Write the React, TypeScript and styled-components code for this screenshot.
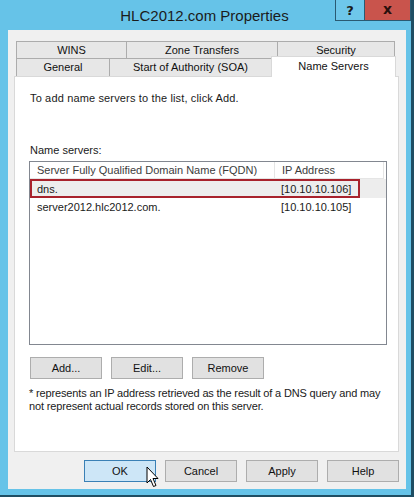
import React, { FC } from 'react';
import styled, { createGlobalStyle } from 'styled-components';

const GlobalStyle = createGlobalStyle`
  html, body {
    margin: 0;
    padding: 0;
    background: #ffffff;
  }
  * {
    box-sizing: border-box;
  }
`;

const UI_FONT = `'Liberation Sans', Arial, sans-serif`;

type TabDataType = { id: number; name: string; width: number };

const topTabs: TabDataType[] = [
  { id: 1, name: 'WINS', width: 111 },
  { id: 2, name: 'Zone Transfers', width: 152 },
  { id: 3, name: 'Security', width: 118 },
];

const bottomTabs: TabDataType[] = [
  { id: 4, name: 'General', width: 94 },
  { id: 5, name: 'Start of Authority (SOA)', width: 163 },
  { id: 6, name: 'Name Servers', width: 125 },
];

const servers = [
  { id: 1, fqdn: 'dns.', ip: '[10.10.10.106]', selected: true },
  { id: 2, fqdn: 'server2012.hlc2012.com.', ip: '[10.10.10.105]', selected: false },
];

const Cursor: FC = () => (
  <CursorBox>
    <svg width="13" height="22" viewBox="0 0 13 22">
      <path
        d="M1 1 L1 17 L4.5 13.5 L7.5 20.5 L10 19.5 L7 12.5 L12 12.5 Z"
        fill="#ffffff"
        stroke="#000000"
        strokeWidth="1"
        strokeLinejoin="round"
      />
    </svg>
  </CursorBox>
);

const App: FC = () => {
  const selectedTab = 6;
  return (
    <>
      <GlobalStyle />
      <Window>
        <TitleBar>
          <Title>HLC2012.com Properties</Title>
          <CaptionButtons>
            <HelpCaption>?</HelpCaption>
            <CloseCaption>x</CloseCaption>
          </CaptionButtons>
        </TitleBar>
        <Body>
          <TabStrip>
            <TabRow>
              {topTabs.map((t) => (
                <Tab key={t.id} $width={t.width}>
                  {t.name}
                </Tab>
              ))}
            </TabRow>
            <TabRow>
              {bottomTabs.map((t) =>
                t.id === selectedTab ? (
                  <SelectedTab key={t.id} $width={t.width}>
                    {t.name}
                  </SelectedTab>
                ) : (
                  <Tab key={t.id} $width={t.width}>
                    {t.name}
                  </Tab>
                )
              )}
            </TabRow>
          </TabStrip>
          <Panel>
            <Intro>To add name servers to the list, click Add.</Intro>
            <Label>Name servers:</Label>
            <ListBox>
              <ListHeader>
                <HeaderCell $width={245}>Server Fully Qualified Domain Name (FQDN)</HeaderCell>
                <HeaderCell $width={109}>IP Address</HeaderCell>
              </ListHeader>
              {servers.map((s) => (
                <ListRow key={s.id} $selected={s.selected}>
                  <NameCell>{s.fqdn}</NameCell>
                  <IpCell>{s.ip}</IpCell>
                  {s.selected && <Highlight />}
                </ListRow>
              ))}
            </ListBox>
            <ButtonRow>
              <Button>Add...</Button>
              <Button>Edit...</Button>
              <Button>Remove</Button>
            </ButtonRow>
            <Note>
              * represents an IP address retrieved as the result of a DNS query and may
              <br />
              not represent actual records stored on this server.
            </Note>
          </Panel>
          <Footer>
            <OkWrap>
              <Button $primary>OK</Button>
              <Cursor />
            </OkWrap>
            <Button>Cancel</Button>
            <Button>Apply</Button>
            <Button>Help</Button>
          </Footer>
        </Body>
      </Window>
    </>
  );
};

export default App;

const Window = styled.div`
  width: 414px;
  height: 497px;
  background: #66c3e8;
  border-right: 3px solid #1f4e63;
  border-bottom: 2px solid #1f4e63;
  display: flex;
  flex-direction: column;
  font-family: ${UI_FONT};
  font-size: 11px;
  color: #1a1a1a;
`;

const TitleBar = styled.div`
  height: 30px;
  display: flex;
  align-items: center;
  justify-content: center;
  position: relative;
`;

const Title = styled.div`
  font-family: ${UI_FONT};
  font-size: 15px;
  color: #1b1b1b;
  padding-top: 1px;
  padding-right: 2px;
`;

const CaptionButtons = styled.div`
  position: absolute;
  top: 0;
  right: 0;
  display: flex;
`;

const HelpCaption = styled.div`
  width: 29px;
  height: 21px;
  border: 1px solid #2a5a72;
  border-top: none;
  border-right: none;
  background: #6ec7ea;
  display: flex;
  align-items: center;
  justify-content: center;
  font-family: 'DejaVu Sans', sans-serif;
  font-weight: bold;
  font-size: 13px;
  color: #1a1a1a;
`;

const CloseCaption = styled.div`
  width: 47px;
  height: 21px;
  border: 1px solid #2a5a72;
  border-top: none;
  background: #c9544c;
  display: flex;
  align-items: center;
  justify-content: center;
  font-family: 'DejaVu Sans', sans-serif;
  font-weight: bold;
  font-size: 14px;
  color: #2a0f0c;
  padding-bottom: 3px;
`;

const Body = styled.div`
  flex: 1;
  margin: 0 0 6px 8px;
  width: 398px;
  background: #f0f0f0;
  padding: 11px 7px 0 6px;
  display: flex;
  flex-direction: column;
`;

const TabStrip = styled.div`
  display: flex;
  flex-direction: column;
  padding-left: 2px;
  position: relative;
  z-index: 1;
`;

const TabRow = styled.div`
  display: flex;
  height: 17px;
  align-items: flex-end;
  &:last-child {
    height: 18px;
  }
`;

const Tab = styled.div<{ $width: number }>`
  width: ${({ $width }) => $width}px;
  height: 100%;
  background: #e7e7e7;
  border: 1px solid #acacac;
  border-bottom: none;
  margin-right: -1px;
  display: flex;
  align-items: center;
  justify-content: center;
  color: #111;
  line-height: 1;
`;

const SelectedTab = styled.div<{ $width: number }>`
  width: ${({ $width }) => $width}px;
  height: 21px;
  margin-bottom: -1px;
  background: #ffffff;
  border: 1px solid #d9d9d9;
  border-bottom: none;
  display: flex;
  align-items: flex-start;
  justify-content: center;
  padding-top: 3px;
  color: #111;
`;

const Panel = styled.div`
  height: 376px;
  background: #ffffff;
  border: 1px solid #d9d9d9;
  padding: 14px 12px 0 14px;
  display: flex;
  flex-direction: column;
`;

const Intro = styled.div`
  height: 14px;
  line-height: 14px;
  margin-left: 1px;
  letter-spacing: 0.15px;
`;

const Label = styled.div`
  margin-top: 38px;
  margin-left: 1px;
  height: 14px;
  line-height: 14px;
`;

const ListBox = styled.div`
  margin-top: 4px;
  width: 358px;
  height: 184px;
  border: 1px solid #828790;
  background: #ffffff;
  display: flex;
  flex-direction: column;
`;

const ListHeader = styled.div`
  display: flex;
  height: 17px;
`;

const HeaderCell = styled.div<{ $width: number }>`
  width: ${({ $width }) => $width}px;
  border-right: 1px solid #e5e5e5;
  border-bottom: 1px solid #e5e5e5;
  padding-left: 7px;
  line-height: 16px;
  color: #3c3c3c;
  white-space: nowrap;
  overflow: hidden;
`;

const ListRow = styled.div<{ $selected: boolean }>`
  position: relative;
  display: flex;
  height: ${({ $selected }) => ($selected ? '19px' : '17px')};
  align-items: center;
  background: ${({ $selected }) => ($selected ? '#ededed' : 'transparent')};
`;

const NameCell = styled.div`
  width: 245px;
  padding-left: 7px;
`;

const IpCell = styled.div`
  padding-left: 6px;
`;

const Highlight = styled.div`
  position: absolute;
  left: 0;
  top: 0;
  width: 330px;
  height: 19px;
  border: 2px solid #a8222c;
  pointer-events: none;
`;

const ButtonRow = styled.div`
  display: flex;
  gap: 9px;
  margin-top: 12px;
  margin-left: 1px;
`;

const Button = styled.div<{ $primary?: boolean }>`
  width: 72px;
  height: 22px;
  background: ${({ $primary }) => ($primary ? '#cde6f7' : '#e1e1e1')};
  border: 1px solid ${({ $primary }) => ($primary ? '#3a80b5' : '#adadad')};
  display: flex;
  align-items: center;
  justify-content: center;
  color: #111;
`;

const Note = styled.div`
  margin-top: 8px;
  line-height: 13px;
  white-space: nowrap;
  letter-spacing: -0.15px;
`;

const Footer = styled.div`
  display: flex;
  justify-content: flex-end;
  gap: 9px;
  margin-top: 8px;
`;

const OkWrap = styled.div`
  position: relative;
`;

const CursorBox = styled.div`
  position: absolute;
  left: 62px;
  top: 6px;
  line-height: 0;
`;
